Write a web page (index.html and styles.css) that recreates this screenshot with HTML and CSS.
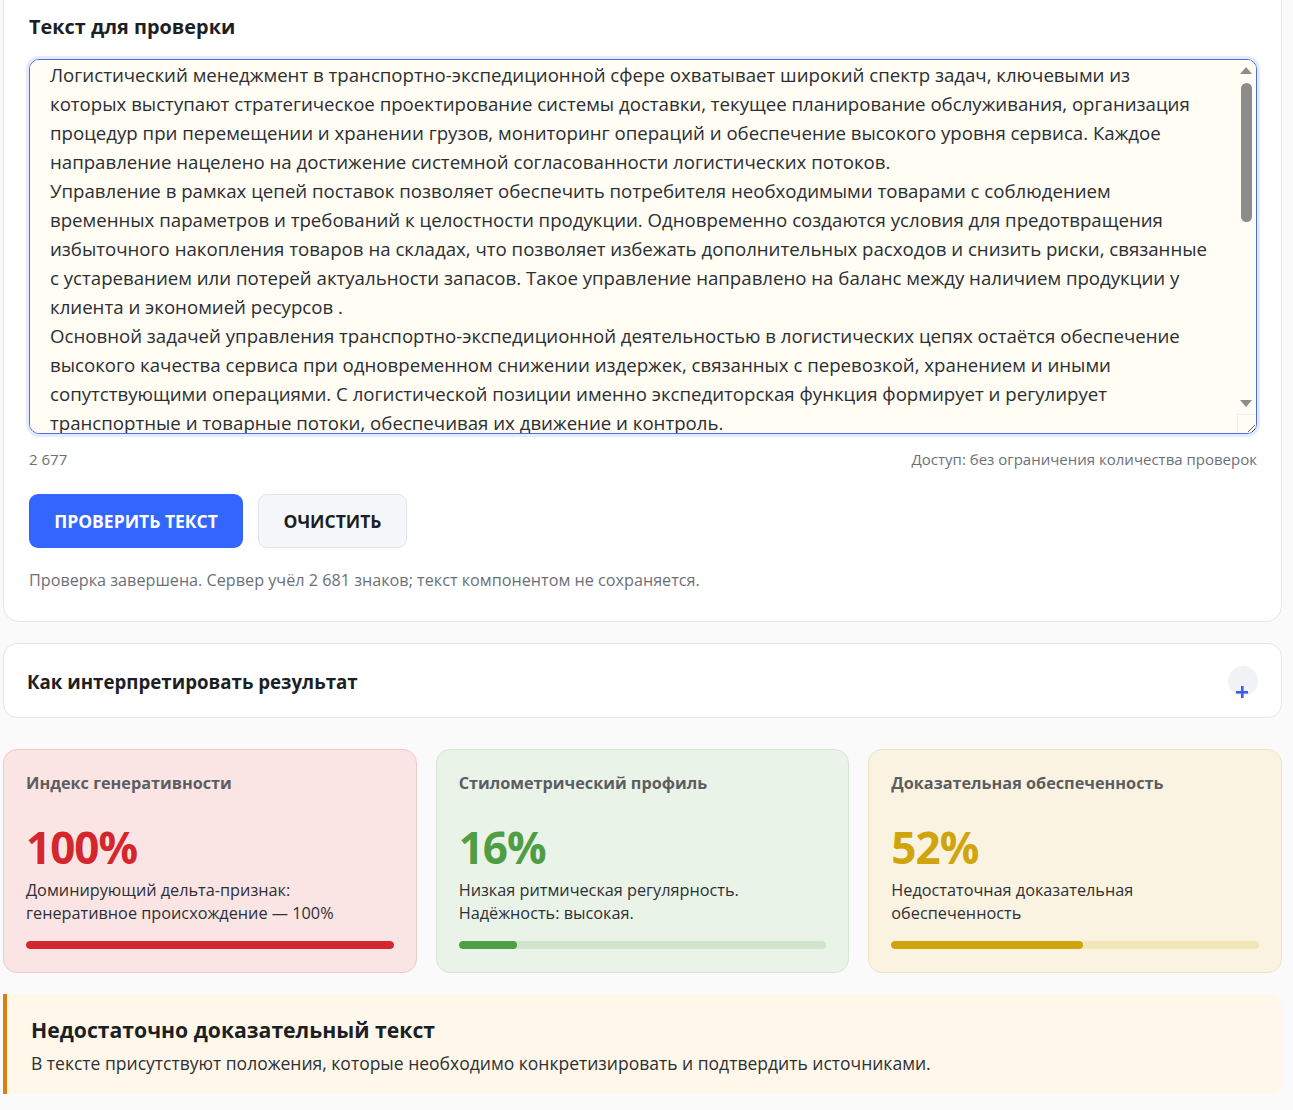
FILE: index.html
```html
<!DOCTYPE html>
<html lang="ru">
<head>
<meta charset="utf-8">
<title>Проверка текста</title>
<link rel="stylesheet" href="styles.css">
</head>
<body>
<div class="page">
  <section class="card check-card">
    <h2 class="card-title">Текст для проверки</h2>
    <div class="input-wrap">
      <textarea class="text-input" spellcheck="false">Логистический менеджмент в транспортно-экспедиционной сфере охватывает широкий спектр задач, ключевыми из которых выступают стратегическое проектирование системы доставки, текущее планирование обслуживания, организация процедур при перемещении и хранении грузов, мониторинг операций и обеспечение высокого уровня сервиса. Каждое направление нацелено на достижение системной согласованности логистических потоков.
Управление в рамках цепей поставок позволяет обеспечить потребителя необходимыми товарами с соблюдением временных параметров и требований к целостности продукции. Одновременно создаются условия для предотвращения избыточного накопления товаров на складах, что позволяет избежать дополнительных расходов и снизить риски, связанные с устареванием или потерей актуальности запасов. Такое управление направлено на баланс между наличием продукции у клиента и экономией ресурсов .
Основной задачей управления транспортно-экспедиционной деятельностью в логистических цепях остаётся обеспечение высокого качества сервиса при одновременном снижении издержек, связанных с перевозкой, хранением и иными сопутствующими операциями. С логистической позиции именно экспедиторская функция формирует и регулирует транспортные и товарные потоки, обеспечивая их движение и контроль.
Экспедиторская деятельность включает подготовку и оформление сопроводительной документации, выбор оптимального вида транспорта и маршрута, консолидацию мелких партий грузов, а также организацию страхования и таможенного оформления. Эффективное взаимодействие экспедитора с перевозчиками, складскими операторами и грузополучателями позволяет сократить сроки доставки и повысить надёжность всей логистической системы.
Важную роль в повышении эффективности играет цифровизация процессов: применение систем электронного документооборота, отслеживание грузов в режиме реального времени и аналитика данных о перевозках. Использование таких инструментов обеспечивает прозрачность операций, снижает вероятность ошибок и позволяет оперативно реагировать на изменения условий поставки.
Таким образом, транспортно-экспедиционное обслуживание выступает связующим звеном между участниками цепи поставок и во многом определяет её конкурентоспособность, гибкость и устойчивость к внешним рискам.</textarea>
      <div class="fake-scroll" aria-hidden="true">
        <span class="arrow-up"></span>
        <span class="thumb"></span>
        <span class="arrow-down"></span>
        <span class="corner"></span>
      </div>
    </div>
    <div class="meta-row">
      <span class="counter">2 677</span>
      <span class="access">Доступ: без ограничения количества проверок</span>
    </div>
    <div class="actions">
      <button class="btn btn-primary" type="button">Проверить текст</button>
      <button class="btn btn-secondary" type="button">Очистить</button>
    </div>
    <p class="status">Проверка завершена. Сервер учёл 2 681 знаков; текст компонентом не сохраняется.</p>
  </section>

  <section class="card accordion">
    <h3 class="accordion-title">Как интерпретировать результат</h3>
    <span class="accordion-toggle" aria-label="Развернуть"><span class="plus"></span></span>
  </section>

  <div class="metrics">
    <div class="metric metric-red">
      <div class="metric-title">Индекс генеративности</div>
      <div class="metric-value">100%</div>
      <div class="metric-desc">Доминирующий дельта-признак:<br>генеративное происхождение — 100%</div>
      <div class="bar"><div class="bar-fill" style="width:100%"></div></div>
    </div>
    <div class="metric metric-green">
      <div class="metric-title">Стилометрический профиль</div>
      <div class="metric-value">16%</div>
      <div class="metric-desc">Низкая ритмическая регулярность.<br>Надёжность: высокая.</div>
      <div class="bar"><div class="bar-fill" style="width:16%"></div></div>
    </div>
    <div class="metric metric-yellow">
      <div class="metric-title">Доказательная обеспеченность</div>
      <div class="metric-value">52%</div>
      <div class="metric-desc">Недостаточная доказательная<br>обеспеченность</div>
      <div class="bar"><div class="bar-fill" style="width:52%"></div></div>
    </div>
  </div>

  <section class="verdict">
    <h3 class="verdict-title">Недостаточно доказательный текст</h3>
    <p class="verdict-text">В тексте присутствуют положения, которые необходимо конкретизировать и подтвердить источниками.</p>
  </section>
</div>
</body>
</html>
```

FILE: styles.css
```css
* { box-sizing: border-box; }

html, body {
  margin: 0;
  padding: 0;
  background: #fafafa;
  font-family: "Open Sans", "Noto Sans", "DejaVu Sans", sans-serif;
  color: #1f2328;
  overflow: hidden;
}

.page {
  width: 1279px;
  margin-left: 3px;
  display: flex;
  flex-direction: column;
}

.card {
  background: #ffffff;
  border: 1px solid #e4e6ea;
  border-radius: 16px;
}

.check-card {
  margin-top: -20px;
  padding: 33px 24px 30px 25px;
  display: flex;
  flex-direction: column;
}

.card-title {
  margin: 0;
  font-size: 19.9px;
  line-height: 26px;
  font-weight: 700;
  color: #1c1f24;
}

.input-wrap {
  position: relative;
  margin-top: 19px;
}

.text-input {
  display: block;
  width: 100%;
  height: 375px;
  padding: 0 47px 10px 20px;
  border: 1px solid #4a6ee0;
  border-radius: 10px;
  box-shadow: 0 0 0 3px rgba(70, 110, 235, 0.14);
  background: #fffdf4;
  font-family: "Open Sans", "Noto Sans", sans-serif;
  font-size: 18.65px;
  line-height: 29px;
  color: #2b2e33;
  outline: none;
  resize: vertical;
}

.fake-scroll {
  position: absolute;
  top: 1px;
  right: 1px;
  bottom: 1px;
  width: 19px;
  pointer-events: none;
}

.arrow-up,
.arrow-down {
  position: absolute;
  right: 4px;
  width: 0;
  height: 0;
  border-left: 6px solid transparent;
  border-right: 6px solid transparent;
}

.arrow-up {
  top: 7px;
  border-bottom: 7px solid #8c8c8c;
}

.arrow-down {
  top: 340px;
  border-top: 7px solid #8c8c8c;
}

.thumb {
  position: absolute;
  top: 23px;
  right: 4px;
  width: 11px;
  height: 139px;
  border-radius: 6px;
  background: #8c8c8c;
}

.corner {
  position: absolute;
  right: 0;
  bottom: 0;
  width: 19px;
  height: 19px;
  border-left: 1px solid #ececec;
  border-top: 1px solid #ececec;
}

.meta-row {
  margin-top: 15px;
  display: flex;
  justify-content: space-between;
  font-size: 15px;
  line-height: 20px;
  color: #6b7078;
}

.actions {
  margin-top: 25px;
  display: flex;
  gap: 15px;
}

.btn {
  height: 54px;
  border-radius: 9px;
  font-family: "Open Sans", "Noto Sans", sans-serif;
  font-size: 17.5px;
  font-weight: 700;
  text-transform: uppercase;
  cursor: pointer;
}

.btn-primary {
  width: 214px;
  background: #3366ff;
  border: none;
  color: #ffffff;
}

.btn-secondary {
  width: 149px;
  background: #f6f7fa;
  border: 1px solid #e2e4e9;
  color: #1c1f24;
}

.status {
  margin: 21px 0 0;
  font-size: 16.2px;
  line-height: 22px;
  color: #6b7078;
}

.accordion {
  margin-top: 21px;
  height: 75px;
  padding: 2px 23px 0;
  border-radius: 14px;
  display: flex;
  align-items: center;
  justify-content: space-between;
}

.accordion-title {
  margin: 0;
  font-size: 18.7px;
  line-height: 26px;
  font-weight: 700;
  color: #1c1f24;
}

.accordion-toggle {
  width: 30px;
  height: 30px;
  border-radius: 50%;
  background: #f1f2f6;
  display: flex;
  justify-content: center;
  align-items: flex-start;
  padding-top: 20px;
  padding-right: 2px;
  margin-top: -1px;
}

.plus {
  display: block;
  width: 12px;
  height: 12px;
  background:
    linear-gradient(#3b5ee8, #3b5ee8) center / 12px 2.6px no-repeat,
    linear-gradient(#3b5ee8, #3b5ee8) center / 2.6px 12px no-repeat;
}

.metrics {
  margin-top: 31px;
  display: grid;
  grid-template-columns: repeat(3, 1fr);
  gap: 19px;
}

.metric {
  height: 224px;
  border: 1px solid;
  border-radius: 14px;
  padding: 22px 22px 0 22px;
  display: flex;
  flex-direction: column;
}

.metric-title {
  font-size: 16.25px;
  line-height: 22px;
  font-weight: 700;
  color: #5b5d61;
}

.metric-value {
  margin-top: 29px;
  font-size: 44px;
  line-height: 48px;
  font-weight: 700;
  letter-spacing: -1px;
}

.metric-desc {
  margin-top: 8px;
  font-size: 16.25px;
  line-height: 23px;
  color: #2d3035;
}

.bar {
  margin-top: 16px;
  height: 8px;
  border-radius: 4px;
  overflow: hidden;
}

.bar-fill {
  height: 100%;
  border-radius: 4px;
}

.metric-red { background: #fbe4e4; border-color: #f0c9c9; }
.metric-red .metric-value { color: #d3272d; }
.metric-red .bar { background: #f2c3c3; }
.metric-red .bar-fill { background: #d3272d; }

.metric-green { background: #eaf3e8; border-color: #d6e6d2; }
.metric-green .metric-value { color: #4f9e45; }
.metric-green .bar { background: #cfe4ca; }
.metric-green .bar-fill { background: #4f9e45; }

.metric-yellow { background: #faf3e2; border-color: #efe4c6; }
.metric-yellow .metric-value { color: #d0a40c; }
.metric-yellow .bar { background: #f3e6b9; }
.metric-yellow .bar-fill { background: #d0a40c; }

.verdict {
  margin-top: 21px;
  height: 100px;
  padding: 22px 24px 0 24px;
  background: #fff7ea;
  border-left: 4px solid #dd7f0e;
  border-radius: 0 12px 12px 0;
}

.verdict-title {
  margin: 0;
  font-size: 21.2px;
  line-height: 28px;
  font-weight: 700;
  color: #1c1f24;
}

.verdict-text {
  margin: 6px 0 0;
  font-size: 17.5px;
  line-height: 26px;
  color: #2d3035;
}
```
